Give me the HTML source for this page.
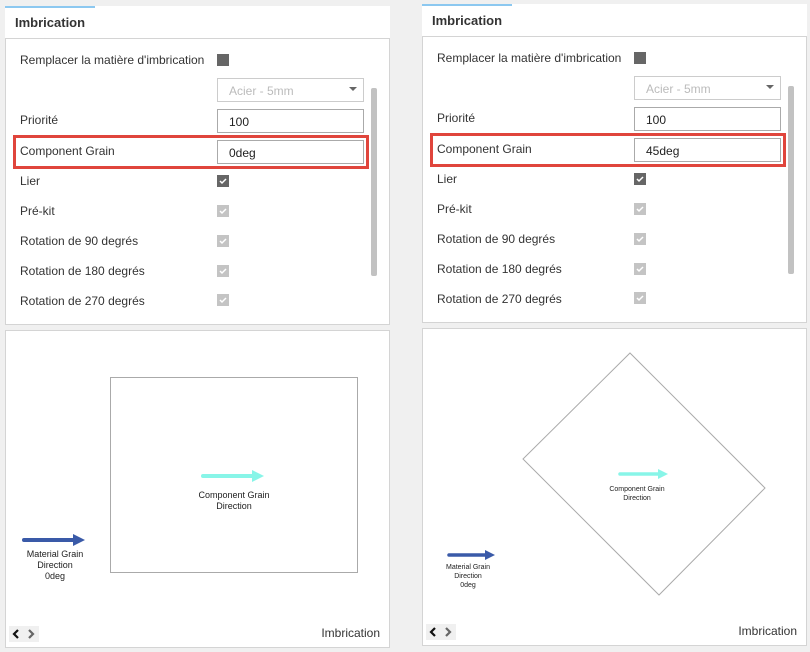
<!DOCTYPE html>
<html><head><meta charset="utf-8"><style>
*{margin:0;padding:0;box-sizing:border-box}
body{width:810px;height:652px;background:#f0f0f0;font-family:"Liberation Sans",sans-serif;position:relative;overflow:hidden;color:#333}
.p{position:absolute;width:385px;height:645px}
.a{position:absolute}
.hdr{left:0;top:0;width:385px;height:33px;background:#fff}
.blue{left:0;top:0;width:90px;height:2px;background:#8cc8f0}
.ht{left:10px;top:9px;font-size:13px;font-weight:bold;color:#333}
.box{left:0;top:32px;width:385px;height:287px;background:#fff;border:1px solid #d4d4d4}
.lb{left:15px;font-size:12px;color:#333}
.cb{left:212px;width:12px;height:12px;background:#c4c4c4}
.cb.d{background:#666}
.cb svg{position:absolute;left:2px;top:2px}
.in{left:212px;width:147px;height:24px;border:1px solid #aaa;background:#fff;font-size:12px;padding:5px 0 0 11px;color:#222}
.red{left:8px;top:129px;width:356px;height:34px;border:3px solid #e0453c}
.sb{left:366px;top:82px;width:6px;height:188px;background:#c2c2c2;border-radius:2px}
.pv{left:0;top:324px;width:385px;height:318px;background:#fff;border:1px solid #d4d4d4}
.nav{left:3px;top:295px;width:30px;height:16px;background:#f0f0f0}
.sm{font-size:9px;color:#222;text-align:center;line-height:11px}
</style></head><body>

<!-- LEFT -->
<div class="p" style="left:5px;top:6px">
<div class="a hdr"></div><div class="a blue"></div><div class="a ht">Imbrication</div>
<div class="a box"></div>
<div class="a lb" style="top:47px">Remplacer la matière d'imbrication</div>
<div class="a cb d" style="top:48px"></div>
<div class="a in" style="top:72px;border-color:#ccc;color:#bbb">Acier - 5mm<span style="position:absolute;right:6px;top:8px;border:4px solid transparent;border-top:4px solid #666"></span></div>
<div class="a lb" style="top:107px">Priorité</div>
<div class="a in" style="top:103px">100</div>
<div class="a red"></div>
<div class="a lb" style="top:138px">Component Grain</div>
<div class="a in" style="top:134px">0deg</div>
<div class="a lb" style="top:168px">Lier</div>
<div class="a cb d" style="top:169px"><svg width="8" height="8"><path d="M1 4l2 2 4-4" stroke="#fff" stroke-width="1.5" fill="none"/></svg></div>
<div class="a lb" style="top:198px">Pré-kit</div>
<div class="a cb" style="top:199px"><svg width="8" height="8"><path d="M1 4l2 2 4-4" stroke="#fff" stroke-width="1.5" fill="none"/></svg></div>
<div class="a lb" style="top:228px">Rotation de 90 degrés</div>
<div class="a cb" style="top:229px"><svg width="8" height="8"><path d="M1 4l2 2 4-4" stroke="#fff" stroke-width="1.5" fill="none"/></svg></div>
<div class="a lb" style="top:258px">Rotation de 180 degrés</div>
<div class="a cb" style="top:259px"><svg width="8" height="8"><path d="M1 4l2 2 4-4" stroke="#fff" stroke-width="1.5" fill="none"/></svg></div>
<div class="a lb" style="top:288px">Rotation de 270 degrés</div>
<div class="a cb" style="top:288px"><svg width="8" height="8"><path d="M1 4l2 2 4-4" stroke="#fff" stroke-width="1.5" fill="none"/></svg></div>
<div class="a sb"></div>
<div class="a pv">
 <div class="a" style="left:104px;top:46px;width:248px;height:196px;border:1px solid #aaa"></div>
 <svg class="a" style="left:0;top:0" width="385" height="318"><path d="M197 145H250" stroke="#88f5e8" stroke-width="4" stroke-linecap="round"/><path d="M246 139L258 145L246 151Z" fill="#88f5e8"/>
 <path d="M18 209H70" stroke="#3a5aa8" stroke-width="4" stroke-linecap="round"/><path d="M67 203L79 209L67 215Z" fill="#3a5aa8"/></svg>
 <div class="a sm" style="left:178px;top:159px;width:100px">Component Grain<br>Direction</div>
 <div class="a sm" style="left:4px;top:218px;width:90px">Material Grain<br>Direction<br>0deg</div>
 <div class="a nav"><svg width="30" height="16"><path d="M9 4L5 8L9 12" stroke="#111" stroke-width="2.2" fill="none"/><path d="M20 4L24 8L20 12" stroke="#666" stroke-width="2.2" fill="none"/></svg></div>
 <div class="a" style="right:9px;top:295px;font-size:12px;color:#333">Imbrication</div>
</div>
</div>

<!-- RIGHT -->
<div class="p" style="left:422px;top:4px">
<div class="a hdr"></div><div class="a blue"></div><div class="a ht">Imbrication</div>
<div class="a box"></div>
<div class="a lb" style="top:47px">Remplacer la matière d'imbrication</div>
<div class="a cb d" style="top:48px"></div>
<div class="a in" style="top:72px;border-color:#ccc;color:#bbb">Acier - 5mm<span style="position:absolute;right:6px;top:8px;border:4px solid transparent;border-top:4px solid #666"></span></div>
<div class="a lb" style="top:107px">Priorité</div>
<div class="a in" style="top:103px">100</div>
<div class="a red"></div>
<div class="a lb" style="top:138px">Component Grain</div>
<div class="a in" style="top:134px">45deg</div>
<div class="a lb" style="top:168px">Lier</div>
<div class="a cb d" style="top:169px"><svg width="8" height="8"><path d="M1 4l2 2 4-4" stroke="#fff" stroke-width="1.5" fill="none"/></svg></div>
<div class="a lb" style="top:198px">Pré-kit</div>
<div class="a cb" style="top:199px"><svg width="8" height="8"><path d="M1 4l2 2 4-4" stroke="#fff" stroke-width="1.5" fill="none"/></svg></div>
<div class="a lb" style="top:228px">Rotation de 90 degrés</div>
<div class="a cb" style="top:229px"><svg width="8" height="8"><path d="M1 4l2 2 4-4" stroke="#fff" stroke-width="1.5" fill="none"/></svg></div>
<div class="a lb" style="top:258px">Rotation de 180 degrés</div>
<div class="a cb" style="top:259px"><svg width="8" height="8"><path d="M1 4l2 2 4-4" stroke="#fff" stroke-width="1.5" fill="none"/></svg></div>
<div class="a lb" style="top:288px">Rotation de 270 degrés</div>
<div class="a cb" style="top:288px"><svg width="8" height="8"><path d="M1 4l2 2 4-4" stroke="#fff" stroke-width="1.5" fill="none"/></svg></div>
<div class="a sb"></div>
<div class="a pv">
 <svg class="a" style="left:0;top:0" width="385" height="318">
 <path d="M207 24L342 159L236 266L100 130Z" fill="none" stroke="#aaa" stroke-width="1"/>
 <path d="M197 145H238" stroke="#88f5e8" stroke-width="3.5" stroke-linecap="round"/><path d="M235 140L245 145L235 150Z" fill="#88f5e8"/>
 <path d="M26 226H65" stroke="#3a5aa8" stroke-width="3.5" stroke-linecap="round"/><path d="M62 221L72 226L62 231Z" fill="#3a5aa8"/></svg>
 <div class="a sm" style="left:174px;top:156px;width:80px;font-size:7px;line-height:9px">Component Grain<br>Direction</div>
 <div class="a sm" style="left:10px;top:234px;width:70px;font-size:7px;line-height:9px">Material Grain<br>Direction<br>0deg</div>
 <div class="a nav"><svg width="30" height="16"><path d="M9 4L5 8L9 12" stroke="#111" stroke-width="2.2" fill="none"/><path d="M20 4L24 8L20 12" stroke="#666" stroke-width="2.2" fill="none"/></svg></div>
 <div class="a" style="right:9px;top:295px;font-size:12px;color:#333">Imbrication</div>
</div>
</div>
</body></html>
